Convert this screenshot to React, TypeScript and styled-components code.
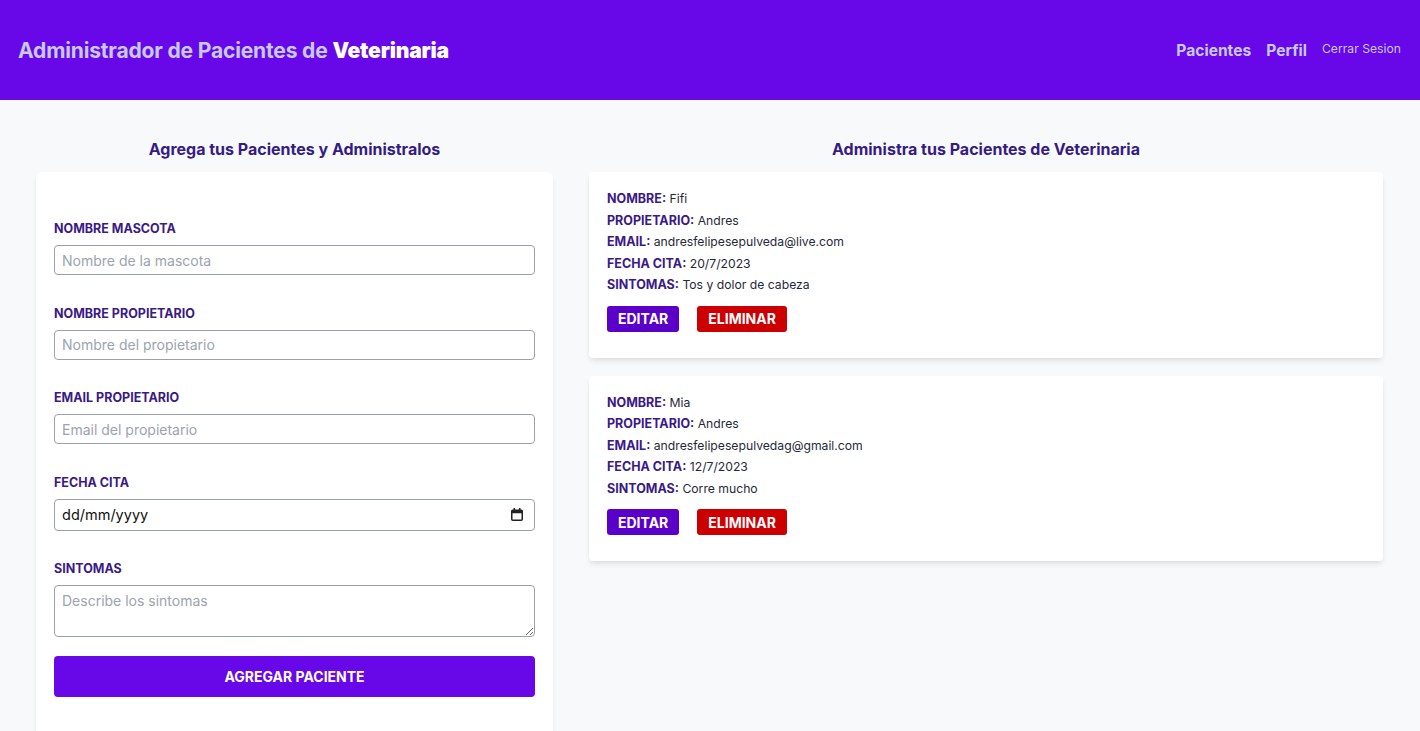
import styled, { createGlobalStyle } from "styled-components";

const GlobalStyle = createGlobalStyle`
  * { box-sizing: border-box; }
  body {
    margin: 0;
    background: #f8f9fb;
    font-family: Inter, "Noto Sans", sans-serif;
  }
`;

const Header = styled.header`
  display: flex;
  align-items: center;
  justify-content: space-between;
  height: 100px;
  padding: 0 19px 0 18px;
  background: #6807e8;
`;
const Title = styled.h1`
  margin: 0;
  font-size: 21.1px;
  font-weight: 700;
  letter-spacing: -0.2px;
  color: #c7c9fb;
  span {
    color: #fff;
    font-weight: 900;
  }
`;
const Nav = styled.nav`
  display: flex;
  align-items: center;
  gap: 15px;
`;
const NavLink = styled.a<{ $small?: boolean }>`
  color: #c7c9fb;
  font-size: ${(p) => (p.$small ? "12.2px" : "15.6px")};
  font-weight: ${(p) => (p.$small ? 400 : 700)};
  text-decoration: none;
  margin-top: ${(p) => (p.$small ? "-3px" : "0")};
`;

const Main = styled.main`
  display: flex;
  gap: 36px;
  padding: 38px 37px 0 36px;
  align-items: flex-start;
`;
const Column = styled.section<{ $w?: string }>`
  ${(p) => (p.$w ? `width: ${p.$w}; flex-shrink: 0;` : "flex: 1;")}
`;
const ColTitle = styled.h2`
  margin: 0 0 12px;
  text-align: center;
  font-size: 16px;
  font-weight: 700;
  color: #351c85;
  line-height: 22px;
`;
const FormCard = styled.form`
  background: #fff;
  border-radius: 6px;
  box-shadow: 0 4px 6px -1px rgba(0, 0, 0, 0.08), 0 2px 4px -2px rgba(0, 0, 0, 0.06);
  padding: 47px 18px 50px;
`;
const Field = styled.div`
  margin-bottom: 28.5px;
`;
const Label = styled.label`
  display: block;
  font-size: 12.5px;
  font-weight: 700;
  text-transform: uppercase;
  color: #3b1a87;
  line-height: 20px;
  margin-bottom: 6px;
`;
const Input = styled.input`
  display: block;
  width: 100%;
  height: 30px;
  border: 1px solid #9aa0b0;
  border-radius: 4px;
  padding: 0 7px;
  font-family: inherit;
  font-size: 14px;
  color: #111;
  &::placeholder { color: #9ca3af; }
`;
const DateBox = styled.div`
  position: relative;
`;
const DateInput = styled(Input)`
  height: 32px;
  font-size: 14.5px;
  &::placeholder { color: #111; }
`;
const CalendarIcon = styled.svg`
  position: absolute;
  right: 12px;
  top: 9px;
  width: 12px;
  height: 13px;
  pointer-events: none;
`;
const TextArea = styled.textarea`
  display: block;
  width: 100%;
  height: 52px;
  border: 1px solid #9aa0b0;
  border-radius: 4px;
  padding: 6px 7px;
  font-family: inherit;
  font-size: 14px;
  &::placeholder { color: #9ca3af; }
`;
const Submit = styled.button`
  display: block;
  width: 100%;
  height: 41px;
  margin-top: -10px;
  border: none;
  border-radius: 4px;
  background: #6807e8;
  color: #fff;
  font-family: inherit;
  font-size: 14px;
  font-weight: 700;
  text-transform: uppercase;
`;

const List = styled.div`
  display: flex;
  flex-direction: column;
  gap: 18px;
`;
const Card = styled.article`
  background: #fff;
  border-radius: 4px;
  box-shadow: 0 4px 6px -1px rgba(0, 0, 0, 0.09), 0 2px 4px -2px rgba(0, 0, 0, 0.07);
  padding: 16px 18px 26px;
`;
const Row = styled.p`
  margin: 0;
  font-size: 12.2px;
  line-height: 21.5px;
  color: #1f2937;
  b {
    font-size: 12.5px;
    color: #3b1a87;
    font-weight: 700;
    text-transform: uppercase;
  }
`;
const Actions = styled.div`
  display: flex;
  gap: 18px;
  margin-top: 10px;
`;
const ActionBtn = styled.button<{ $danger?: boolean }>`
  height: 26px;
  padding: 0 11px;
  border: none;
  border-radius: 3px;
  background: ${(p) => (p.$danger ? "#cc0000" : "#5a00c9")};
  color: #fff;
  font-family: inherit;
  font-size: 14px;
  font-weight: 700;
  text-transform: uppercase;
`;

const pacientes = [
  {
    nombre: "Fifi",
    propietario: "Andres",
    email: "andresfelipesepulveda@live.com",
    fecha: "20/7/2023",
    sintomas: "Tos y dolor de cabeza",
  },
  {
    nombre: "Mia",
    propietario: "Andres",
    email: "andresfelipesepulvedag@gmail.com",
    fecha: "12/7/2023",
    sintomas: "Corre mucho",
  },
];

export default function App() {
  return (
    <>
      <GlobalStyle />
      <Header>
        <Title>
          Administrador de Pacientes de <span>Veterinaria</span>
        </Title>
        <Nav>
          <NavLink>Pacientes</NavLink>
          <NavLink>Perfil</NavLink>
          <NavLink $small>Cerrar Sesion</NavLink>
        </Nav>
      </Header>
      <Main>
        <Column $w="517px">
          <ColTitle>Agrega tus Pacientes y Administralos</ColTitle>
          <FormCard onSubmit={(e) => e.preventDefault()}>
            <Field>
              <Label htmlFor="mascota">Nombre Mascota</Label>
              <Input id="mascota" placeholder="Nombre de la mascota" />
            </Field>
            <Field>
              <Label htmlFor="propietario">Nombre Propietario</Label>
              <Input id="propietario" placeholder="Nombre del propietario" />
            </Field>
            <Field>
              <Label htmlFor="email">Email Propietario</Label>
              <Input id="email" type="email" placeholder="Email del propietario" />
            </Field>
            <Field>
              <Label htmlFor="fecha">Fecha Cita</Label>
              <DateBox>
                <DateInput id="fecha" placeholder="dd/mm/yyyy" />
                <CalendarIcon viewBox="0 0 12 13">
                  <rect x="0.75" y="2.25" width="10.5" height="10" rx="1" fill="none" stroke="#222" strokeWidth="1.5" />
                  <rect x="0.75" y="2.25" width="10.5" height="3" fill="#222" />
                  <rect x="2.5" y="0" width="1.5" height="3" fill="#222" />
                  <rect x="8" y="0" width="1.5" height="3" fill="#222" />
                </CalendarIcon>
              </DateBox>
            </Field>
            <Field>
              <Label htmlFor="sintomas">Sintomas</Label>
              <TextArea id="sintomas" placeholder="Describe los sintomas" />
            </Field>
            <Submit type="submit">Agregar Paciente</Submit>
          </FormCard>
        </Column>
        <Column>
          <ColTitle>Administra tus Pacientes de Veterinaria</ColTitle>
          <List>
            {pacientes.map((p) => (
              <Card key={p.email}>
                <Row><b>Nombre:</b> {p.nombre}</Row>
                <Row><b>Propietario:</b> {p.propietario}</Row>
                <Row><b>Email:</b> {p.email}</Row>
                <Row><b>Fecha Cita:</b> {p.fecha}</Row>
                <Row><b>Sintomas:</b> {p.sintomas}</Row>
                <Actions>
                  <ActionBtn>Editar</ActionBtn>
                  <ActionBtn $danger>Eliminar</ActionBtn>
                </Actions>
              </Card>
            ))}
          </List>
        </Column>
      </Main>
    </>
  );
}
